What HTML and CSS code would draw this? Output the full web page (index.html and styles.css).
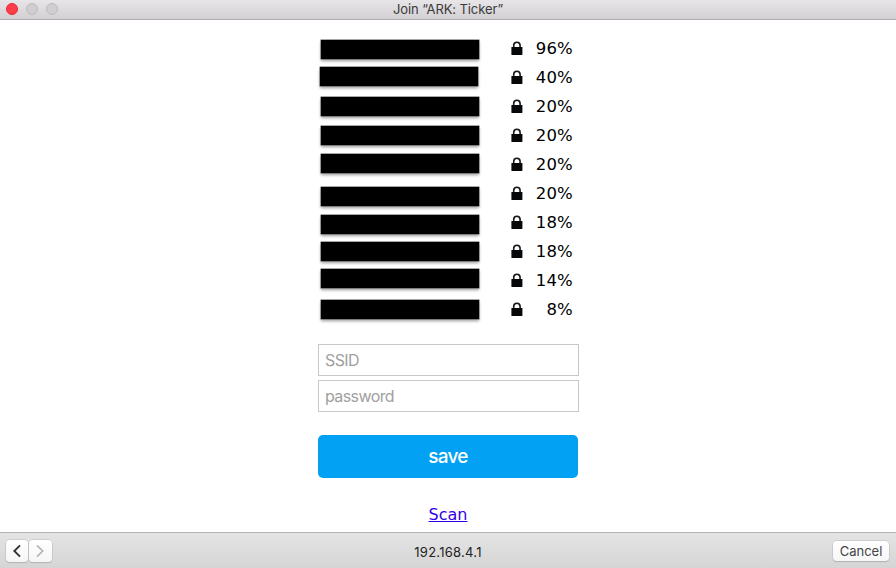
FILE: index.html
```html
<!DOCTYPE html>
<html lang="en">
<head>
<meta charset="utf-8">
<title>Join “ARK: Ticker”</title>
<link rel="stylesheet" href="styles.css">
</head>
<body>
<svg class="defs" width="0" height="0"><symbol id="lock" viewBox="0 0 12 15"><path d="M2.7 7V4.6C2.7 2.5 4 1.3 5.9 1.3s3.2 1.2 3.2 3.3V7" fill="none" stroke="#17191a" stroke-width="1.6"/><rect x=".4" y="6" width="11" height="8" rx=".4" fill="#050708"/></symbol></svg>
<div class="window">
<header class="titlebar">
<div class="lights"><i class="light close"></i><i class="light"></i><i class="light"></i></div>
<h1 class="title">Join “ARK: Ticker”</h1>
</header>
<main class="page">
<ul class="networks">
<li class="network"><span class="name n1"></span><svg class="lock"><use href="#lock"/></svg><span class="signal">96%</span></li>
<li class="network"><span class="name n2"></span><svg class="lock"><use href="#lock"/></svg><span class="signal">40%</span></li>
<li class="network"><span class="name n3"></span><svg class="lock"><use href="#lock"/></svg><span class="signal">20%</span></li>
<li class="network"><span class="name n4"></span><svg class="lock"><use href="#lock"/></svg><span class="signal">20%</span></li>
<li class="network"><span class="name n5"></span><svg class="lock"><use href="#lock"/></svg><span class="signal">20%</span></li>
<li class="network"><span class="name n6"></span><svg class="lock"><use href="#lock"/></svg><span class="signal">20%</span></li>
<li class="network"><span class="name n7"></span><svg class="lock"><use href="#lock"/></svg><span class="signal">18%</span></li>
<li class="network"><span class="name n8"></span><svg class="lock"><use href="#lock"/></svg><span class="signal">18%</span></li>
<li class="network"><span class="name n9"></span><svg class="lock"><use href="#lock"/></svg><span class="signal">14%</span></li>
<li class="network"><span class="name n10"></span><svg class="lock"><use href="#lock"/></svg><span class="signal">8%</span></li>
</ul>
<form class="form">
<input class="field" type="text" placeholder="SSID">
<input class="field" type="text" placeholder="password">
<button class="save" type="button">save</button>
</form>
<a class="scan" href="#">Scan</a>
</main>
<footer class="toolbar">
<div class="nav">
<button class="navbtn" type="button" aria-label="Back"><svg width="8" height="14" viewBox="0 0 8 14"><path d="M7 1.4 1.3 7 7 12.6" fill="none" stroke="#303030" stroke-width="1.9"/></svg></button>
<button class="navbtn" type="button" aria-label="Forward"><svg width="8" height="14" viewBox="0 0 8 14"><path d="M1 1.4 6.7 7 1 12.6" fill="none" stroke="#b5b5b5" stroke-width="1.7"/></svg></button>
</div>
<span class="address">192.168.4.1</span>
<button class="cancel" type="button">Cancel</button>
</footer>
</div>
</body>
</html>
```
FILE: styles.css
```css
* { box-sizing: border-box; }
body { margin: 0; background: #fff; color: #000; font-family: "DejaVu Sans", sans-serif; }
.defs { display: none; }
.window { display: flex; flex-direction: column; width: 896px; height: 568px; overflow: hidden; }
.titlebar { display: grid; grid-template-columns: 1fr auto 1fr; height: 20px; background: linear-gradient(#e7e5e7, #d2d0d2); border-bottom: 1px solid #afadaf; }
.lights { display: flex; gap: 8px; padding: 3px 0 0 6px; }
.light { width: 12px; height: 12px; border: 1px solid #bdbbbd; border-radius: 50%; background: #d0ced0; }
.close { background: #fd3e48; border-color: #ec2635; }
.title { margin: 0; font: 400 13px/19px Inter, sans-serif; letter-spacing: -0.1px; color: #3b393b; }
.page { display: flex; flex: 1; flex-direction: column; align-items: center; padding-top: 14px; }
.networks { width: 260px; margin: 0; padding: 0; list-style: none; }
.network { display: grid; grid-template-columns: 193px 12px 1fr; height: 29px; }
.name { width: 158px; height: 19px; margin-left: 3px; background: #000; box-shadow: 0 0 0 0.5px #555, 0 2px 3px rgba(0, 0, 0, 0.4); }
.n1 { margin-top: 6px; }
.n2 { margin-top: 4px; margin-left: 2px; }
.n3, .n4, .n8, .n10 { margin-top: 5px; }
.n5 { margin-top: 4px; }
.n6 { margin-top: 8px; }
.n7 { margin-top: 7px; }
.n9 { margin-top: 3px; }
.lock { width: 12px; height: 15px; margin-top: 7px; }
.signal { padding-right: 5px; text-align: right; font-size: 16.5px; line-height: 30px; letter-spacing: 0.2px; }
.form { display: flex; flex-direction: column; width: 261px; margin: 20px 0 0 1px; }
.field { width: 261px; height: 32px; margin: 0 0 4px; padding: 0 6px 1px; border: 1px solid #c8c8c8; border-radius: 0; background: #fff; font: 16px Inter, sans-serif; letter-spacing: -0.6px; }
.field::placeholder { color: #a0a0a0; opacity: 1; }
.save { width: 260px; height: 43px; margin-top: 19px; padding: 0; border: 0; border-radius: 5px; background: #02a1f3; color: #fff; font: 500 19px/43px Inter, sans-serif; letter-spacing: -0.7px; }
.scan { margin-top: 27px; color: #3100e8; font-size: 16px; line-height: 20px; text-underline-offset: 1px; text-decoration-thickness: 1px; }
.toolbar { display: grid; grid-template-columns: 1fr auto 1fr; height: 36px; border-top: 1px solid #b5b5b5; background: linear-gradient(#e4e4e4, #d5d5d5); }
.nav { display: flex; gap: 1px; padding: 7px 0 0 6px; }
.navbtn, .cancel { height: 22px; padding: 0; border: 0; border-radius: 4px; background: linear-gradient(#fff, #f6f6f6); box-shadow: 0 0 0 0.5px #bbb, 0 1px 1px #aaa; }
.navbtn { display: flex; align-items: center; justify-content: center; width: 22px; padding-right: 1px; }
.navbtn + .navbtn { width: 23px; }
.address { margin-top: 9px; font: 13px/20px Inter, sans-serif; letter-spacing: 0.25px; color: #222; }
.cancel { justify-self: end; width: 56px; height: 20px; margin: 8px 7px 0 0; font: 13px/20px Inter, sans-serif; color: #444; }
```
